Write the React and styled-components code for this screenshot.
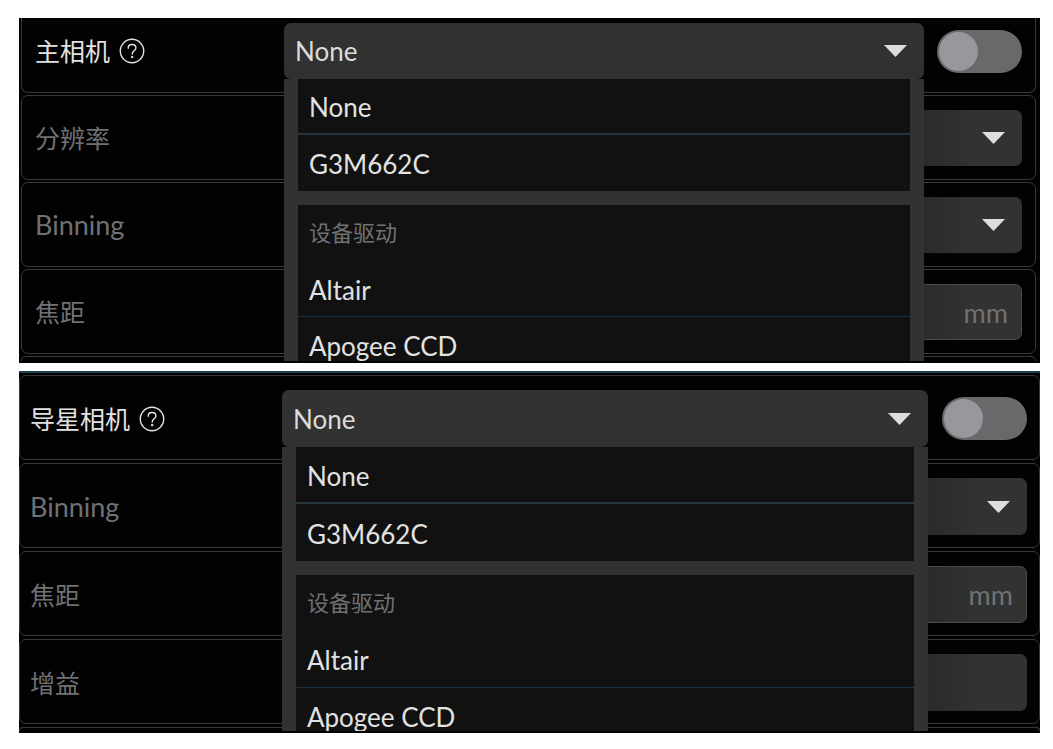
import React from "react";
import styled, { createGlobalStyle, css } from "styled-components";

const GlobalStyle = createGlobalStyle`
  *, *::before, *::after { box-sizing: border-box; }
  body {
    margin: 0;
    background: #fff;
    font-family: Lato, "Noto Sans CJK SC", sans-serif;
  }
  button, input, select { font: inherit; color: inherit; margin: 0; }
`;

const Page = styled.main`
  display: flex;
  flex-direction: column;
  gap: 8px;
  padding: 18px 13px 15px 19px;
`;

const Panel = styled.section`
  --control: ${(p) => (p.$guide ? "57px" : "56px")};
  display: flex;
  flex-direction: column;
  gap: ${(p) => (p.$guide ? "3px" : "2px")};
  padding: ${(p) => (p.$guide ? "2px 0 0" : "0 4px 0 2px")};
  overflow: hidden;
  background: #020202;
  border-bottom: 2px solid #020202;
  ${(p) => p.$guide && css`border-top: 2px solid #1d4052;`}
`;

const Row = styled.div`
  display: grid;
  grid-template-columns: ${(p) => (p.$guide ? "252px" : "249px")} minmax(0, 1fr) auto;
  align-items: center;
  padding: ${(p) => (p.$guide ? "14px 12px 12px 10px" : "14px 13px 13px 13px")};
  border: 1px solid #383838;
  border-radius: 7px;
  color: #707174;
  ${(p) => p.$cutTop && css`
    padding-top: 5px;
    border-top: 0;
    border-radius: 0 0 7px 7px;
  `}
  ${(p) => p.$active && css`color: #e2e2e2;`}
`;

const RowEdge = styled.div`
  height: ${(p) => (p.$guide ? "4px" : "5px")};
  border: 1px solid #383838;
  border-bottom: 0;
  border-radius: 7px 7px 0 0;
`;

const LabelCell = styled.div`
  display: flex;
  align-items: center;
  gap: 9px;
`;

const Label = styled.label`
  font-size: ${(p) => (p.$latin ? "27px" : "25px")};
  line-height: 32px;
`;

const HelpButton = styled.button`
  display: flex;
  padding: 0;
  border: 0;
  background: none;
`;

const Field = styled.div`
  position: relative;
  display: flex;
  align-items: center;
  height: var(--control);
  grid-column: ${(p) => (p.$wide ? "2 / 4" : "2")};
  border-radius: 7px;
  background: ${(p) =>
    p.$wide
      ? "linear-gradient(to left, #323232 50px, #2e2f31 68px, #2b2c2c 90px, #282a2a 110px)"
      : "linear-gradient(#323232 60%, #2f3032)"};
  ${(p) => p.$outlined && css`border: 1px solid #4b4b4b;`}
`;

const Select = styled.select`
  width: 100%;
  height: 100%;
  padding: 0 48px 0 11px;
  border: 0;
  background: none;
  appearance: none;
  font-size: 26px;
  color: #dcdcdc;
  outline: none;
`;

const Input = styled.input`
  flex: 1;
  min-width: 0;
  height: 100%;
  padding: 0 12px;
  border: 0;
  background: none;
  font-size: 26px;
  outline: none;
`;

const Unit = styled.span`
  padding-right: 13px;
  font-size: 27px;
`;

const CaretIcon = styled.svg`
  position: absolute;
  right: 17px;
  width: 23px;
  height: 12px;
  pointer-events: none;
  fill: #dedede;
`;

const Switch = styled.input`
  appearance: none;
  display: block;
  width: 85px;
  height: 43px;
  margin-left: ${(p) => (p.$guide ? "14px" : "13px")};
  padding: 2px;
  border-radius: 22px;
  background: #68696b;
  &::before {
    content: "";
    display: block;
    width: 39px;
    height: 39px;
    border-radius: 50%;
    background: #97989c;
  }
  &:checked::before { margin-left: auto; }
`;

const Menu = styled.div`
  position: absolute;
  z-index: 2;
  top: 100%;
  left: 0;
  right: 0;
  display: flex;
  flex-direction: column;
  gap: 14px;
  padding: 0 14px 14px;
  background: #323232;
  color: #e2e2e2;
`;

const Group = styled.div`
  background: #111;
`;

const GroupTitle = styled.div`
  height: 56px;
  padding-left: 11px;
  font-size: 22px;
  line-height: 56px;
  color: #707174;
`;

const Option = styled.button`
  display: block;
  width: 100%;
  height: var(--control);
  padding: 2px 11px 0;
  border: 0;
  border-bottom: ${(p) => p.$line}px solid ${(p) => (p.$line > 1 ? "#26353e" : "#1b3242")};
  background: none;
  font-size: 26px;
  line-height: 32px;
  text-align: left;
`;

function Caret() {
  return (
    <CaretIcon viewBox="0 0 23 12" aria-hidden="true">
      <path d="M0 0H23L11.5 12Z" />
    </CaretIcon>
  );
}

function Help() {
  return (
    <HelpButton type="button" aria-label="帮助">
      <svg width="26" height="26" viewBox="0 0 26 26" fill="none" stroke="currentColor" strokeWidth="1.4" strokeLinecap="round">
        <circle cx="13" cy="13" r="11.7" />
        <path d="M9.2 10.2C9.2 7.8 10.8 6.5 13 6.5C15.300 6.500 16.900 7.900 16.900 9.900C16.900 12.600 13.200 12.800 13.200 15.900" />
        <circle cx="13.200" cy="19" r="0.500" fill="currentColor" />
      </svg>
    </HelpButton>
  );
}

function CameraRow({ id, label, guide, cutTop }) {
  return (
    <Row $guide={guide} $cutTop={cutTop} $active>
      <LabelCell>
        <Label htmlFor={id}>{label}</Label>
        <Help />
      </LabelCell>
      <Field>
        <Select id={id} defaultValue="None">
          <option>None</option>
          <option>G3M662C</option>
          <option>Altair</option>
          <option>Apogee CCD</option>
        </Select>
        <Caret />
        <Menu role="listbox" aria-label={label}>
          <Group>
            <Option type="button" role="option" $line={2}>None</Option>
            <Option type="button" role="option" $line={0}>G3M662C</Option>
          </Group>
          <Group>
            <GroupTitle>设备驱动</GroupTitle>
            <Option type="button" role="option" $line={1}>Altair</Option>
            <Option type="button" role="option" $line={1}>Apogee CCD</Option>
          </Group>
        </Menu>
      </Field>
      <Switch type="checkbox" role="switch" aria-label={label} $guide={guide} />
    </Row>
  );
}

function SelectRow({ id, label, guide, latin }) {
  return (
    <Row $guide={guide}>
      <Label htmlFor={id} $latin={latin}>{label}</Label>
      <Field $wide>
        <Select id={id} />
        <Caret />
      </Field>
    </Row>
  );
}

function InputRow({ id, label, guide, unit }) {
  return (
    <Row $guide={guide}>
      <Label htmlFor={id}>{label}</Label>
      <Field $wide $outlined={Boolean(unit)}>
        <Input id={id} type="text" />
        {unit && <Unit>{unit}</Unit>}
      </Field>
    </Row>
  );
}

export default function App() {
  return (
    <>
      <GlobalStyle />
      <Page lang="zh-CN">
        <Panel>
          <CameraRow id="main-camera" label="主相机" cutTop />
          <SelectRow id="main-resolution" label="分辨率" />
          <SelectRow id="main-binning" label="Binning" latin />
          <InputRow id="main-focal" label="焦距" unit="mm" />
          <RowEdge />
        </Panel>
        <Panel $guide>
          <CameraRow id="guide-camera" label="导星相机" guide />
          <SelectRow id="guide-binning" label="Binning" guide latin />
          <InputRow id="guide-focal" label="焦距" unit="mm" guide />
          <InputRow id="guide-gain" label="增益" guide />
          <RowEdge $guide />
        </Panel>
      </Page>
    </>
  );
}
